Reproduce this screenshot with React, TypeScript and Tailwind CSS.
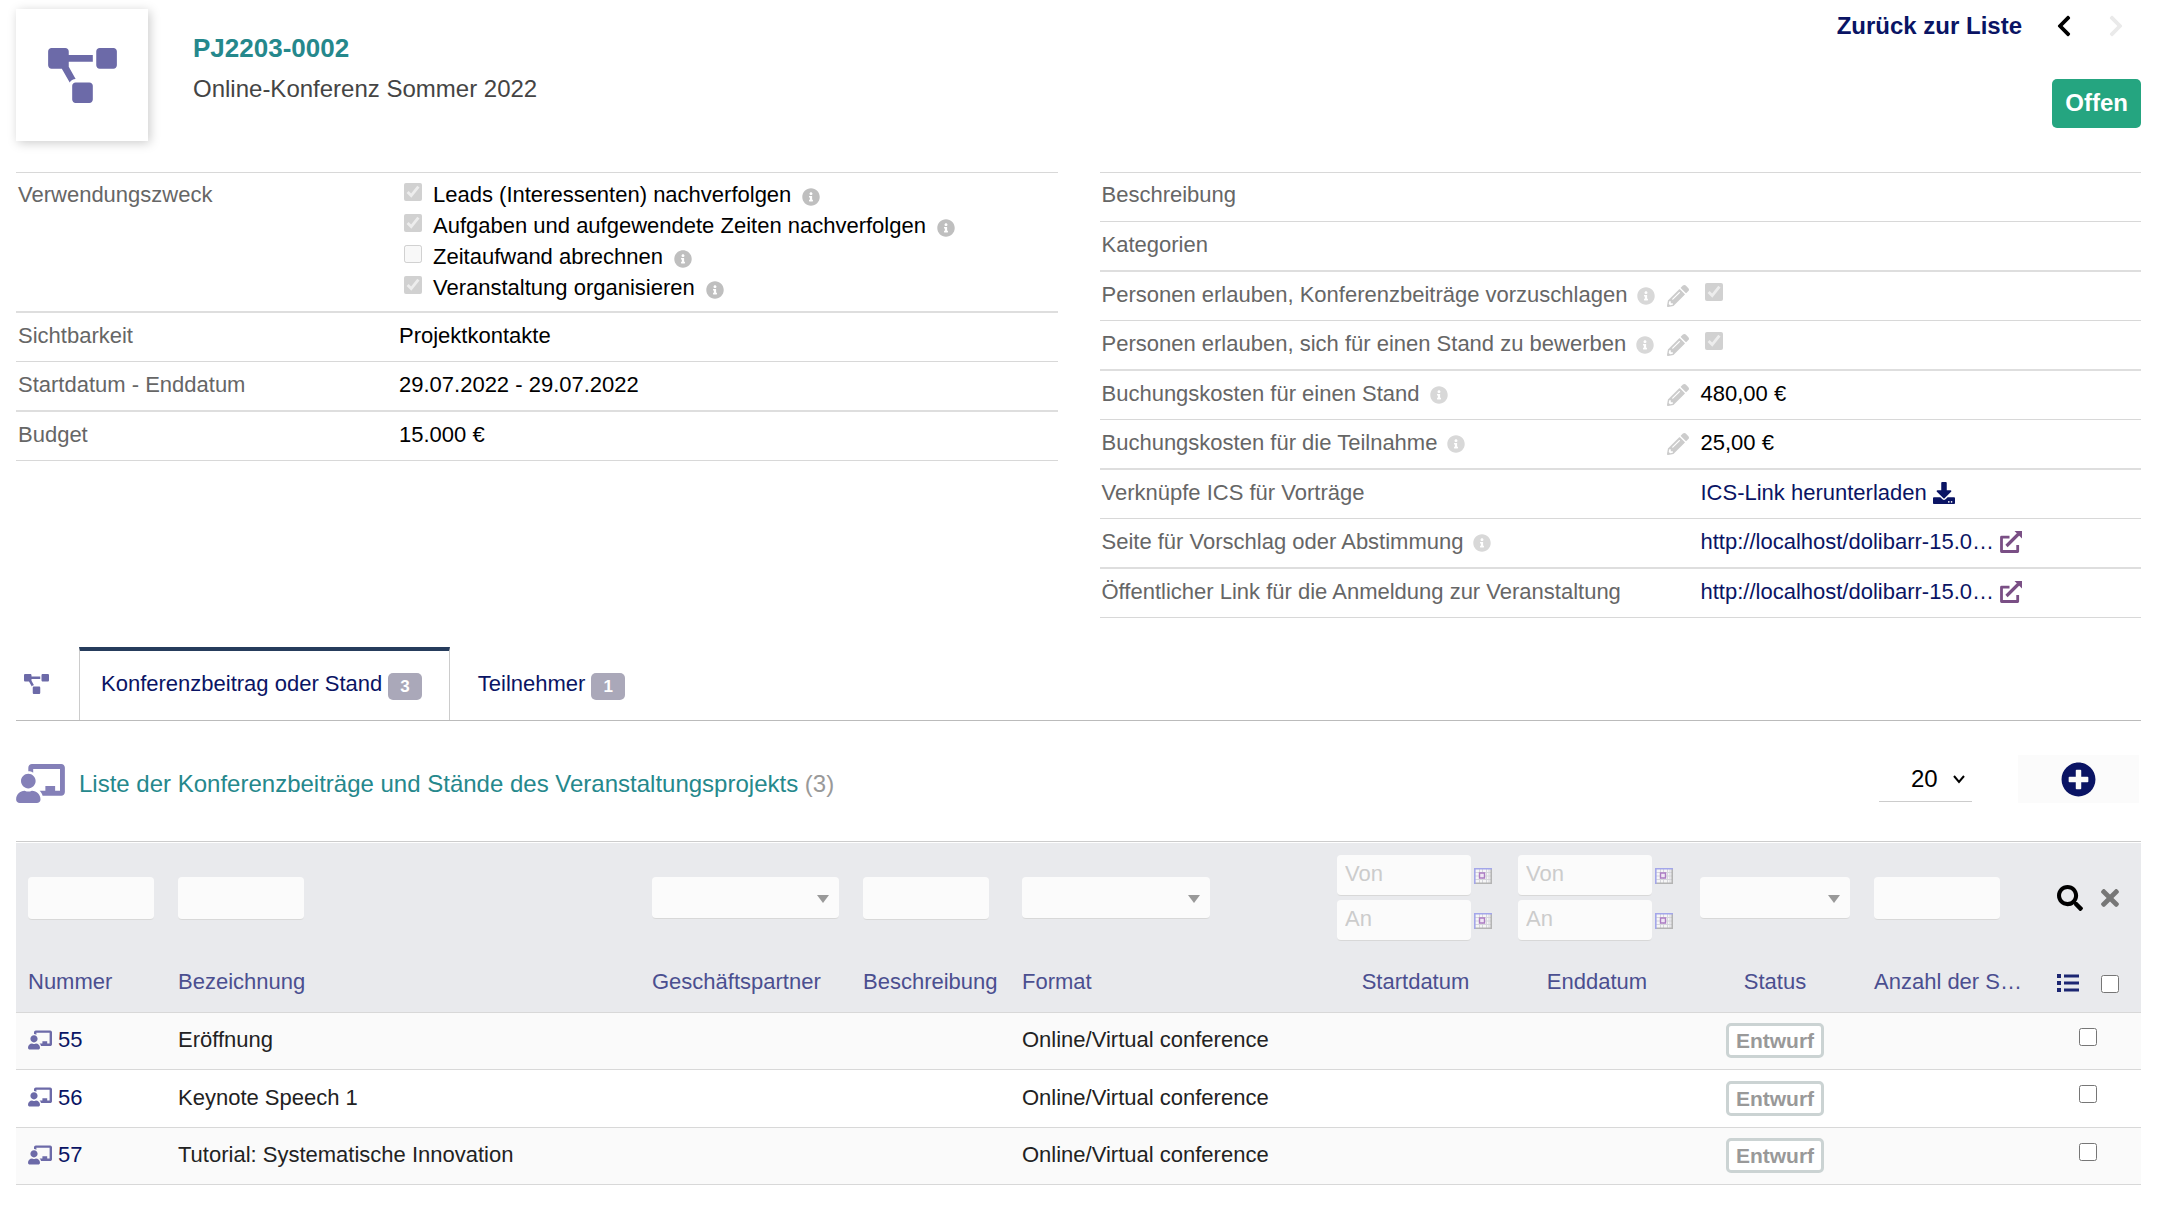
import type { ReactNode } from "react";
import {
  FaChalkboardTeacher,
  FaChevronLeft,
  FaChevronRight,
  FaDownload,
  FaInfoCircle,
  FaPencilAlt,
  FaPlusCircle,
  FaProjectDiagram,
  FaSearch,
  FaTimes,
} from "react-icons/fa";

const usages = [
  { id: "leads", label: "Leads (Interessenten) nachverfolgen", checked: true },
  { id: "tasks", label: "Aufgaben und aufgewendete Zeiten nachverfolgen", checked: true },
  { id: "billing", label: "Zeitaufwand abrechnen", checked: false },
  { id: "events", label: "Veranstaltung organisieren", checked: true },
];

const conferences = [
  { id: 55, label: "Eröffnung" },
  { id: 56, label: "Keynote Speech 1" },
  { id: 57, label: "Tutorial: Systematische Innovation" },
];

function ExternalIcon() {
  return (
    <svg viewBox="0 0 22 22" className="size-[22px] shrink-0" fill="none" stroke="#7a4f85">
      <path d="M9.500 6.200H1.500V20.500H17.700V14" strokeWidth="2.800" strokeLinejoin="round" />
      <path d="M6.500 15L19 2.500" strokeWidth="3.200" />
      <path d="M14.500 0H22v7.500z" fill="#7a4f85" stroke="none" />
    </svg>
  );
}

function CalendarIcon() {
  return (
    <svg viewBox="0 0 18 16" className="h-4 w-[18px]" fill="none">
      <path d="M1 1h16v14H1z" fill="#f6f6f6" />
      <path d="M5.500 1v14M8.500 1v14M12.500 1v14M15 1v14M1 4.500h16M1 8h16M1 11.500h16" stroke="#d6d6dc" />
      <path d="M17.200 1v14.200H1" stroke="#b4b4b4" strokeWidth="1.600" />
      <path d="M.8 16V.8H18" stroke="#a3a6ea" strokeWidth="1.600" />
      <path d="M5.500 5h5v5h-5z" fill="#f0e6f4" stroke="#ac7cc2" strokeWidth="1.400" />
    </svg>
  );
}

function ColumnsIcon() {
  return (
    <svg viewBox="0 0 22 19" className="h-[19px] w-[22px]" fill="currentColor">
      <path d="M0 1h4v4H0zM0 8h4v4H0zM0 15h4v4H0z" />
      <path d="M7 1.500h15v3H7zM7 8.500h15v3H7zM7 15.500h15v3H7z" />
    </svg>
  );
}

/* Zeile einer Detailtabelle */
function Row({ label, info, edit, thick, children }: {
  label: string;
  info?: boolean;
  edit?: boolean;
  thick?: boolean;
  children?: ReactNode;
}) {
  return (
    <tr className={thick ? "group border-b-2 border-[#dedede]" : "group border-b border-[#d8d8d8]"}>
      <th scope="row" className="px-0.5 py-[7px] align-top text-left font-normal text-[#666] group-first:pt-1.5 group-first:pb-2">
        <div className="flex min-h-[34px] items-start">
          <span>{label}</span>
          {info && <FaInfoCircle className="mt-2 ml-2.5 size-[18px] text-[#d8d8d8]" />}
          {edit && (
            <button type="button" aria-label={label + " bearbeiten"} className="mt-1.5 mr-2 ml-auto text-[#ccc]">
              <FaPencilAlt className="size-[22px]" />
            </button>
          )}
        </div>
      </th>
      <td className="px-0.5 py-[7px] align-top group-first:pt-1.5 group-first:pb-2">{children}</td>
    </tr>
  );
}

function DateFilter({ name }: { name: string }) {
  return (
    <div className="flex flex-col gap-1">
      {["Von", "An"].map((part) => (
        <div key={part} className="flex items-center gap-[3px]">
          <input
            type="text"
            placeholder={part}
            aria-label={name + " " + part}
            className="h-[41px] w-[134px] rounded border-b border-[#d8d8d8] bg-[#fbfbfb] px-2 pb-0.5 placeholder:text-[#ccc]"
          />
          <button type="button" aria-label={name + " auswählen"}>
            <CalendarIcon />
          </button>
        </div>
      ))}
    </div>
  );
}

function TextFilter({ name }: { name: string }) {
  return (
    <input
      type="text"
      aria-label={name}
      className="block h-[43px] w-[126px] rounded border-b border-[#d8d8d8] bg-[#fbfbfb] px-2"
    />
  );
}

function SelectFilter({ name }: { name: string }) {
  return (
    <div className="relative">
      <select
        aria-label={name}
        className="block h-[42px] w-full appearance-none rounded border-b border-[#d8d8d8] bg-[#fbfbfb] px-2"
      >
        <option></option>
      </select>
      <svg viewBox="0 0 12 8" className="pointer-events-none absolute top-[18px] right-2.5 h-2 w-3" fill="#999">
        <path d="M0 0h12L6 8z" />
      </svg>
    </div>
  );
}

function TabBadge({ count }: { count: number }) {
  return (
    <span className="mt-1.5 ml-1.5 rounded-[5px] bg-[#aaa8b9] px-3 text-[17px] leading-[27px] font-bold text-white">
      {count}
    </span>
  );
}

export default function App() {
  return (
    <div className="min-h-screen bg-white pt-[9px] pr-[23px] pb-7 pl-4 font-['Liberation_Sans',Arial,sans-serif] text-[22px] leading-[31px] text-black">
      <header className="flex h-[163px] items-start">
        <div className="flex size-[132px] shrink-0 items-center justify-center bg-white shadow-[2px_2px_10px_#ccc]">
          <FaProjectDiagram className="h-[55px] w-[69px] text-[#6c6aa8]" />
        </div>
        <div className="ml-[45px] pt-[22px]">
          <h1 className="text-[26px] leading-[34px] font-bold text-[#25888c]">PJ2203-0002</h1>
          <p className="mt-[7px] text-2xl leading-[34px] text-[#444]">Online-Konferenz Sommer 2022</p>
        </div>
        <div className="ml-auto flex flex-col items-end">
          <nav className="flex h-[34px] items-center text-2xl font-bold">
            <a href="#liste" className="text-[#0a1464]">Zurück zur Liste</a>
            <a href="#zurueck" aria-label="Vorheriger Eintrag" className="ml-8 text-black">
              <FaChevronLeft className="h-6 w-5" />
            </a>
            <a href="#weiter" aria-label="Nächster Eintrag" className="mr-[15px] ml-8 text-[#eaeaea]">
              <FaChevronRight className="h-6 w-5" />
            </a>
          </nav>
          <span className="mt-9 flex h-[49px] items-center rounded-[5px] bg-[#25a580] px-[13px] pb-0.5 text-2xl font-bold text-white">
            Offen
          </span>
        </div>
      </header>

      <div className="grid grid-cols-2 items-start gap-[42px]">
        <table className="w-full table-fixed border-collapse border-t border-[#d8d8d8]">
          <colgroup>
            <col className="w-[381px]" />
            <col />
          </colgroup>
          <tbody>
            <Row label="Verwendungszweck" thick>
              {usages.map((usage) => (
                <div key={usage.id} className="flex h-[31px] items-start pl-[5px]">
                  <input
                    type="checkbox"
                    id={usage.id}
                    defaultChecked={usage.checked}
                    disabled
                    className="mt-1 size-[18px]"
                  />
                  <label htmlFor={usage.id} className="ml-[11px]">{usage.label}</label>
                  <FaInfoCircle className="mt-[9px] ml-[11px] size-[18px] text-[#bfbfbf]" />
                </div>
              ))}
            </Row>
            <Row label="Sichtbarkeit">Projektkontakte</Row>
            <Row label="Startdatum - Enddatum" thick>29.07.2022 - 29.07.2022</Row>
            <Row label="Budget">15.000 €</Row>
          </tbody>
        </table>

        <table className="w-full table-fixed border-collapse border-t border-[#d8d8d8]">
          <colgroup>
            <col className="w-[599px]" />
            <col />
          </colgroup>
          <tbody>
            <Row label="Beschreibung" />
            <Row label="Kategorien" thick />
            <Row label="Personen erlauben, Konferenzbeiträge vorzuschlagen" info edit>
              <input type="checkbox" aria-label="Konferenzbeiträge vorschlagen" defaultChecked disabled className="mt-1 ml-1 block size-[18px]" />
            </Row>
            <Row label="Personen erlauben, sich für einen Stand zu bewerben" info edit thick>
              <input type="checkbox" aria-label="Für einen Stand bewerben" defaultChecked disabled className="mt-1 ml-1 block size-[18px]" />
            </Row>
            <Row label="Buchungskosten für einen Stand" info edit>480,00 €</Row>
            <Row label="Buchungskosten für die Teilnahme" info edit thick>25,00 €</Row>
            <Row label="Verknüpfe ICS für Vorträge">
              <a href="#ics" className="flex items-center gap-1.5 text-[#0a1464]">
                ICS-Link herunterladen
                <FaDownload className="size-[22px]" />
              </a>
            </Row>
            <Row label="Seite für Vorschlag oder Abstimmung" info thick>
              <a href="#vorschlag" className="flex items-center gap-1.5 text-[#0a1464]">
                http://localhost/dolibarr-15.0…
                <ExternalIcon />
              </a>
            </Row>
            <Row label="Öffentlicher Link für die Anmeldung zur Veranstaltung">
              <a href="#anmeldung" className="flex items-center gap-1.5 text-[#0a1464]">
                http://localhost/dolibarr-15.0…
                <ExternalIcon />
              </a>
            </Row>
          </tbody>
        </table>
      </div>

      {/* Reiter */}
      <nav className="mt-[29px] flex h-[74px] border-b border-[#bbb] text-[#0a1464]">
        <a href="#projekt" aria-label="Projekt" className="flex w-[63px] items-center pl-2">
          <FaProjectDiagram className="h-5 w-[25px] text-[#6c6aa8]" />
        </a>
        <a href="#konferenzbeitrag" className="flex items-center border-x border-t-4 border-x-[#ccc] border-t-[#263c5c] pr-[27px] pb-1 pl-[21px]">
          Konferenzbeitrag oder Stand
          <TabBadge count={3} />
        </a>
        <a href="#teilnehmer" className="flex items-center px-7">
          Teilnehmer
          <TabBadge count={1} />
        </a>
      </nav>

      <div className="flex h-[120px] items-center pb-1">
        <FaChalkboardTeacher className="mt-2 h-[39px] w-[49px] text-[#8480b8]" />
        <h2 className="mt-2.5 ml-3.5 text-2xl text-[#25888c]">
          Liste der Konferenzbeiträge und Stände des Veranstaltungsprojekts <span className="text-[#999]">(3)</span>
        </h2>
        <div className="relative ml-auto">
          <select
            aria-label="Einträge pro Seite"
            className="h-[46px] w-[93px] appearance-none border-b border-[#ccc] bg-transparent pl-8 text-2xl"
          >
            <option>20</option>
          </select>
          <svg viewBox="0 0 12 9" className="pointer-events-none absolute top-[19px] right-[7px] h-[9px] w-3" fill="none" stroke="#000" strokeWidth="2">
            <path d="M1 1l5 6 5-6" />
          </svg>
        </div>
        <button type="button" aria-label="Neu" className="mr-0.5 ml-[46px] flex h-12 w-[121px] items-center justify-center bg-[#fbfbfb] text-[#0a1464]">
          <FaPlusCircle className="size-[35px]" />
        </button>
      </div>

      <div className="border-t border-[#ccc] pt-px">
        <table className="w-full table-fixed border-collapse text-left">
          <colgroup>
            <col className="w-[150px]" />
            <col />
            <col className="w-[211px]" />
            <col className="w-[159px]" />
            <col className="w-[315px]" />
            <col className="w-[181px]" />
            <col className="w-[182px]" />
            <col className="w-[174px]" />
            <col className="w-[173px]" />
            <col className="w-[106px]" />
          </colgroup>
          <thead className="border-b border-[#d8d8d8] bg-[#e9eaed] text-[#4b4f90]">
            <tr className="h-[110px]">
              <td className="px-3"><TextFilter name="Nummer" /></td>
              <td className="px-3"><TextFilter name="Bezeichnung" /></td>
              <td className="px-3"><SelectFilter name="Geschäftspartner" /></td>
              <td className="px-3"><TextFilter name="Beschreibung" /></td>
              <td className="px-3"><div className="w-[188px]"><SelectFilter name="Format" /></div></td>
              <td className="px-3"><DateFilter name="Startdatum" /></td>
              <td className="px-3"><DateFilter name="Enddatum" /></td>
              <td className="px-3"><SelectFilter name="Status" /></td>
              <td className="px-3"><TextFilter name="Anzahl der S…" /></td>
              <td>
                <div className="flex items-center justify-center gap-3.5 pl-1">
                  <button type="button" aria-label="Suchen" className="text-black"><FaSearch className="size-[26px]" /></button>
                  <button type="button" aria-label="Filter entfernen" className="text-[#777]"><FaTimes className="size-[26px]" /></button>
                </div>
              </td>
            </tr>
            <tr className="h-[59px]">
              <th className="px-3 pb-0.5 font-normal">Nummer</th>
              <th className="px-3 pb-0.5 font-normal">Bezeichnung</th>
              <th className="px-3 pb-0.5 font-normal">Geschäftspartner</th>
              <th className="px-3 pb-0.5 font-normal">Beschreibung</th>
              <th className="px-3 pb-0.5 font-normal">Format</th>
              <th className="px-3 pb-0.5 text-center font-normal">Startdatum</th>
              <th className="px-3 pb-0.5 text-center font-normal">Enddatum</th>
              <th className="px-3 pb-0.5 text-center font-normal">Status</th>
              <th className="pb-0.5 pl-3 font-normal whitespace-nowrap">Anzahl der S…</th>
              <th>
                <div className="flex items-center justify-center gap-[22px]">
                  <button type="button" aria-label="Spalten" className="text-[#1c2672]"><ColumnsIcon /></button>
                  <input type="checkbox" aria-label="Alle auswählen" className="mt-1 size-[18px]" />
                </div>
              </th>
            </tr>
          </thead>
          <tbody className="text-[#222]">
            {conferences.map((conf) => (
              <tr key={conf.id} className="h-[57px] border-b border-[#d8d8d8] odd:bg-[#fafafa] even:h-[58px]">
                <td className="px-3 pb-0.5">
                  <a href={"#" + conf.id} className="flex items-center gap-1.5 text-[#0a1464]">
                    <FaChalkboardTeacher className="h-5 w-6 text-[#6c6aa8]" />
                    {conf.id}
                  </a>
                </td>
                <td className="px-3 pb-0.5">{conf.label}</td>
                <td></td>
                <td></td>
                <td className="px-3 pb-0.5">Online/Virtual conference</td>
                <td></td>
                <td></td>
                <td className="text-center">
                  <span className="inline-block rounded-[5px] border-3 border-[#cbd3d3] bg-white px-[7px] text-[21px] leading-[29px] font-bold text-[#999]">
                    Entwurf
                  </span>
                </td>
                <td></td>
                <td>
                  <input type="checkbox" aria-label={conf.label + " auswählen"} className="mx-auto mb-2 block size-[18px]" />
                </td>
              </tr>
            ))}
          </tbody>
        </table>
      </div>
    </div>
  );
}
